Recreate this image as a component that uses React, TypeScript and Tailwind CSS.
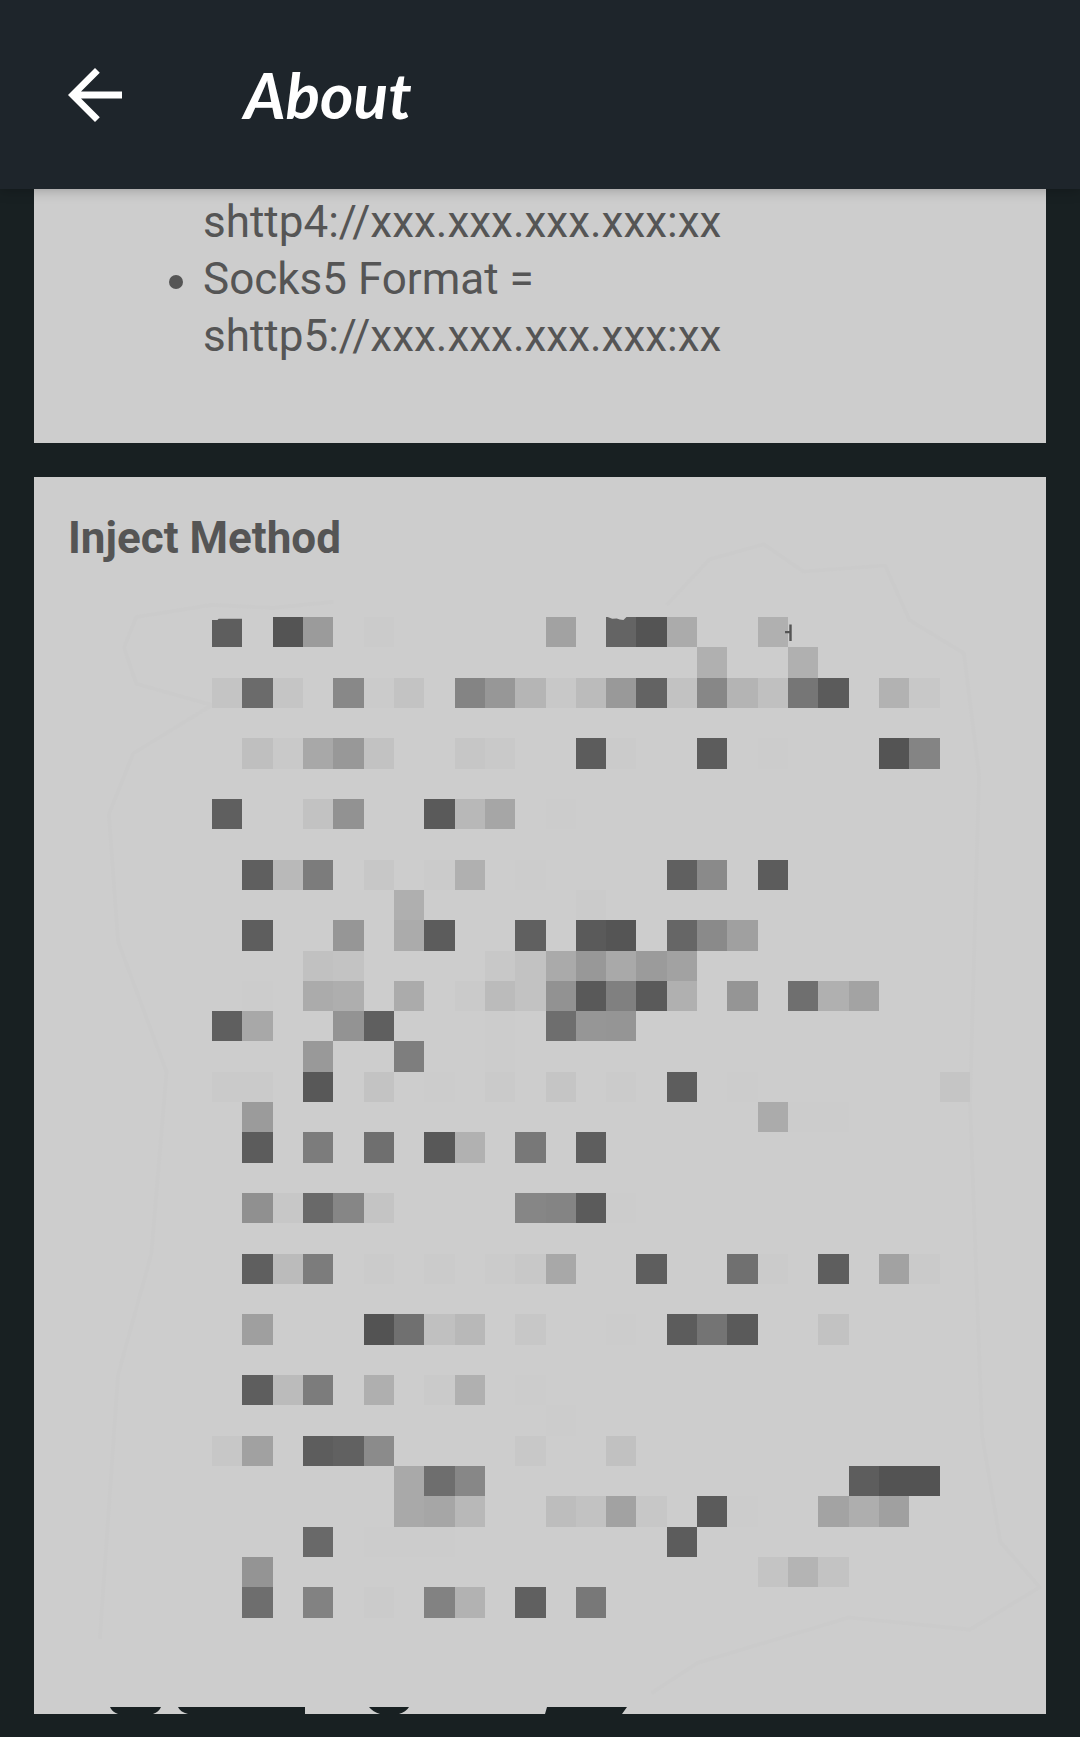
import React from "react";

type Cell = [column: number, shade: string];

const MOSAIC: Record<number, Cell[]> = {
  0: [[0, "5e"], [2, "54"], [3, "9b"], [5, "cb"], [11, "a2"], [13, "64"], [14, "54"], [15, "ab"], [18, "b0"]],
  1: [[16, "b0"], [19, "b0"]],
  2: [[0, "c4"], [1, "6b"], [2, "c5"], [4, "88"], [5, "cb"], [6, "c3"], [8, "84"], [9, "97"], [10, "b5"], [11, "c8"], [12, "bb"], [13, "99"], [14, "63"], [15, "c2"], [16, "87"], [17, "b4"], [18, "c0"], [19, "76"], [20, "5b"], [22, "b2"], [23, "c8"]],
  4: [[1, "bf"], [2, "c9"], [3, "a8"], [4, "98"], [5, "c2"], [8, "c6"], [9, "c9"], [12, "5c"], [13, "cb"], [16, "5c"], [18, "cc"], [22, "54"], [23, "84"]],
  6: [[0, "5f"], [3, "c2"], [4, "92"], [7, "5a"], [8, "b8"], [9, "a6"], [11, "cc"]],
  8: [[1, "5f"], [2, "b9"], [3, "7c"], [5, "c7"], [7, "cb"], [8, "b0"], [10, "cc"], [15, "60"], [16, "8a"], [18, "5c"]],
  9: [[6, "af"], [12, "cb"]],
  10: [[1, "5e"], [4, "96"], [6, "ab"], [7, "5c"], [10, "60"], [12, "5a"], [13, "55"], [15, "66"], [16, "8a"], [17, "a0"]],
  11: [[3, "c1"], [4, "c3"], [9, "c8"], [10, "c2"], [11, "aa"], [12, "98"], [13, "a9"], [14, "9b"], [15, "a2"]],
  12: [[1, "cc"], [3, "ab"], [4, "ae"], [6, "ab"], [8, "ca"], [9, "bb"], [10, "c2"], [11, "92"], [12, "59"], [13, "80"], [14, "5a"], [15, "b0"], [17, "95"], [19, "6f"], [20, "b0"], [21, "a3"]],
  13: [[0, "5f"], [1, "a8"], [4, "93"], [5, "5f"], [9, "cc"], [11, "6e"], [12, "96"], [13, "95"]],
  14: [[3, "99"], [6, "7e"], [9, "cc"]],
  15: [[0, "ca"], [1, "ca"], [3, "58"], [5, "c3"], [7, "cc"], [9, "ca"], [11, "c5"], [13, "cb"], [15, "5d"], [17, "cc"], [24, "c5"]],
  16: [[1, "9b"], [18, "ab"], [19, "cc"], [20, "cc"]],
  17: [[1, "5c"], [3, "7c"], [5, "6f"], [7, "58"], [8, "b1"], [10, "78"], [12, "5e"]],
  19: [[1, "90"], [2, "c7"], [3, "69"], [4, "86"], [5, "c4"], [10, "86"], [11, "84"], [12, "5b"], [13, "cc"]],
  21: [[1, "5f"], [2, "bb"], [3, "7c"], [5, "cb"], [7, "cb"], [9, "cb"], [10, "c8"], [11, "a8"], [14, "5e"], [17, "70"], [18, "cb"], [20, "5e"], [22, "a2"], [23, "ca"]],
  23: [[1, "9f"], [5, "53"], [6, "70"], [7, "c0"], [8, "b8"], [10, "c7"], [13, "cc"], [15, "5c"], [16, "74"], [17, "5a"], [20, "c2"]],
  25: [[1, "5e"], [2, "bb"], [3, "7c"], [5, "af"], [7, "ca"], [8, "b0"], [10, "cc"]],
  26: [[11, "cc"]],
  27: [[0, "c7"], [1, "a1"], [3, "5d"], [4, "61"], [5, "8b"], [10, "c8"], [13, "c1"]],
  28: [[6, "a9"], [7, "6e"], [8, "87"], [21, "5d"], [22, "53"], [23, "53"]],
  29: [[6, "a9"], [7, "a6"], [8, "b8"], [11, "bd"], [12, "c2"], [13, "a2"], [14, "c7"], [16, "5b"], [17, "cc"], [20, "a3"], [21, "ae"], [22, "a0"]],
  30: [[3, "69"], [5, "cc"], [6, "cc"], [7, "cc"], [15, "5c"]],
  31: [[1, "94"], [18, "c4"], [19, "b4"], [20, "c3"]],
  32: [[1, "6e"], [3, "82"], [5, "cb"], [7, "82"], [8, "b2"], [10, "60"], [12, "78"]],
};

function Mosaic() {
  return (
    <svg
      viewBox="0 0 25 33"
      className="mt-[50px] ml-[178px] w-[758px] max-w-3/4 overflow-visible"
      role="img"
      aria-label="Obscured list"
    >
      <path
        d="M4 -.5L2 -.3 0 -.4-2.500 0-2.900 1-2.500 2.200 0 2.900-2.600 4.500-3.400 6.500-3.100 10.700-1.500 15-2 21-3.100 25-3.700 33.700M15 -.4L16.400 -1.900 18.200 -2.400 19.500 -1.500 22.200 -1.700 23 .1 24.800 1.200 25.300 5.200 25 16 25.400 27 26 30.500 27.300 32 25 33.400 21 33 16 34.500 14.500 35.500"
        fill="none"
        stroke="#cbcbcb"
        strokeWidth=".12"
        strokeLinejoin="round"
      />
      <g shapeRendering="crispEdges">
        {Object.entries(MOSAIC).flatMap(([row, cells]) =>
          cells.map(([column, shade]) => (
            <rect
              key={`${row}-${column}`}
              x={column}
              y={Number(row)}
              width="1"
              height="1"
              fill={`#${shade}${shade}${shade}`}
            />
          )),
        )}
      </g>
      <path d="M0 0h1v.06H.22L.18.1H0zM13.050 0h.62l-.1.1-.12-.02-.1-.03-.15.01z" fill="#cdcdcd" />
      <path d="M19.080.25v.54M18.900.5h.18" stroke="#555" strokeWidth=".08" fill="none" />
    </svg>
  );
}

function Notches() {
  return (
    <svg
      viewBox="0 0 1012 7"
      className="mt-[89px] block w-full"
      fill="#182022"
      aria-hidden="true"
    >
      <path d="M76 0h51q-2 5-8 7H84q-6-2-8-7zM144 0h127v7H154q-8-2-10-7zM335 0h40q-3 5-10 7h-19q-7-2-11-7zM513 0h80l-5 7h-77z" />
    </svg>
  );
}

export default function App() {
  return (
    <div className="flex min-h-screen flex-col bg-[#182022] font-[Roboto,sans-serif] text-[44px] leading-[57px] text-[#555555]">
      <header className="relative flex h-[189px] shrink-0 items-center bg-[#1e252b] pl-[68px] text-white shadow-[0_1px_12px_rgba(0,0,0,0.25)]">
        <button type="button" aria-label="Back" className="size-[54px]">
          <svg viewBox="0 0 54 54" fill="currentColor" aria-hidden="true">
            <path d="M54 23.600H13L31.800 4.800 27 0 0 27l27 27 4.800-4.800L13 30.400h41z" />
          </svg>
        </button>
        <h1 className="ml-[122px] font-[Lato,sans-serif] text-[64px] leading-[72px] font-bold italic">About</h1>
      </header>

      <main className="flex flex-col gap-[34px] px-[34px] pb-[23px]">
        <section className="bg-[#cdcdcd] pt-[5px] pb-[78px] pl-[169px]">
          <ul>
            <li>shttp4://xxx.xxx.xxx.xxx:xx</li>
            <li className="relative before:absolute before:top-[24px] before:-left-[34px] before:size-[14px] before:rounded-full before:bg-[#555555]">
              Socks5 Format =
              <br />
              shttp5://xxx.xxx.xxx.xxx:xx
            </li>
          </ul>
        </section>

        <section className="bg-[#cdcdcd] pt-[33px]">
          <h2 className="pl-[34px] font-bold">Inject Method</h2>
          <Mosaic />
          <Notches />
        </section>
      </main>
    </div>
  );
}
